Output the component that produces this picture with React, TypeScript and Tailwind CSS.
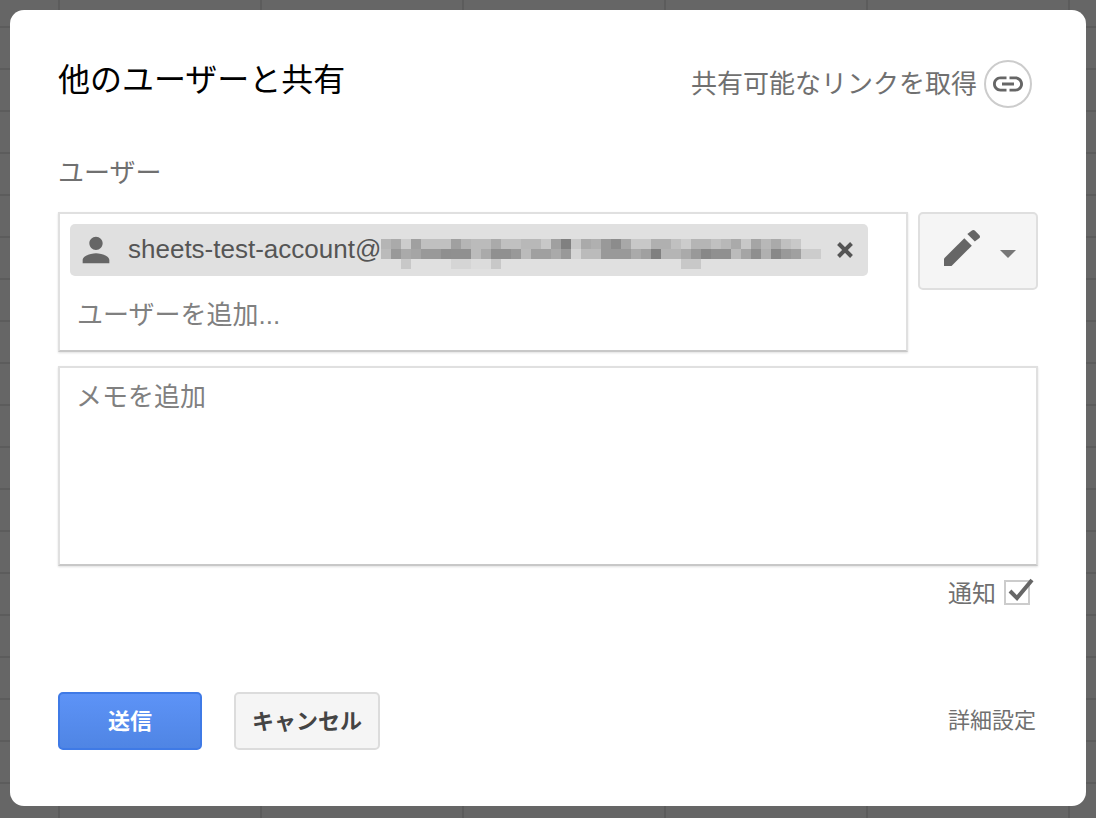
const row1 = ["b5","aa","cc","a0","c0","c0","c0","a0","b5","bb","bb","aa","c0","c0","b8","b8","c8","a0","80","c8","aa","b0","99","8c","a8","c8","c8","b0","b0","c0","cc","b5","b5","c0","b8","aa","c8","a5","b8","aa","c0","c8"];
const row2 = ["bb","99","aa","a5","99","99","8f","90","90","bb","aa","90","90","99","bb","a0","a0","aa","99","d5","bb","bb","99","99","99","aa","a0","80","b5","b5","aa","99","88","90","90","bb","a5","8f","b0","88","99","a0","cc","cc"];
const row3 = ["","","c8","","","","","d5","d5","dc","dc","c8","","","","","","","","","","","","","","","","","","","c8","c8"];

function Blur() {
  return (
    <div className="flex flex-col mt-[8px] shrink-0">
      {[row1, row2, row3].map((row, i) => (
        <div key={i} className="flex h-[10px]">
          {row.map((c, j) => (
            <div key={j} className="w-[10px] h-[10px]" style={{ backgroundColor: c ? `#${c}${c}${c}` : "transparent" }} />
          ))}
        </div>
      ))}
    </div>
  );
}

export default function App() {
  return (
    <div className="w-[1096px] h-[818px] p-[10px] overflow-hidden bg-[#666666] bg-[linear-gradient(#5c5c5c_2px,transparent_2px),linear-gradient(90deg,#5c5c5c_2px,transparent_2px)] bg-[size:202px_42px] bg-[position:58px_26px] font-['Liberation_Sans','Noto_Sans_CJK_JP',sans-serif]">
      <div className="w-[1076px] h-[796px] bg-white rounded-[14px] px-12 flex flex-col">
        <div className="flex justify-between items-center mt-[48px] h-[52px]">
          <h1 className="text-[32px] leading-[44px] text-black -mt-[9px]">他のユーザーと共有</h1>
          <div className="flex items-center mr-[6px] text-[26px] text-[#707070]">
            <span>共有可能なリンクを取得</span>
            <div className="ml-[7px] w-[48px] h-[48px] rounded-full border-2 border-[#cccccc] flex items-center justify-center">
              <svg width="36" height="36" viewBox="0 0 24 24" fill="#666666">
                <path d="M3.9 12c0-1.71 1.39-3.1 3.1-3.1h4V7H7c-2.76 0-5 2.24-5 5s2.24 5 5 5h4v-1.9H7c-1.71 0-3.1-1.39-3.1-3.1zM8 13h8v-2H8v2zm9-6h-4v1.9h4c1.71 0 3.1 1.39 3.1 3.1s-1.39 3.1-3.1 3.1h-4V17h4c2.76 0 5-2.24 5-5s-2.24-5-5-5z" />
              </svg>
            </div>
          </div>
        </div>

        <div className="mt-[54px] h-[36px] leading-[36px] text-[26px] text-[#707070] -translate-y-[9px]">ユーザー</div>

        <div className="flex mt-[12px] justify-between items-start">
          <div className="w-[850px] h-[140px] border-2 border-[#e0e0e0] border-b-[#c8c8c8] shadow-[0_1px_2px_rgba(0,0,0,0.12)] p-[10px] flex flex-col">
            <div className="w-[798px] h-[52px] bg-[#e0e0e0] rounded-[5px] flex items-center">
              <svg className="ml-[6px] shrink-0" width="40" height="40" viewBox="0 0 24 24" fill="#666666">
                <path d="M12 12c2.21 0 4-1.79 4-4s-1.79-4-4-4-4 1.79-4 4 1.79 4 4 4zm0 2c-2.67 0-8 1.34-8 4v2h16v-2c0-2.66-5.33-4-8-4z" />
              </svg>
              <span className="ml-[12px] text-[26px] text-[#555555] whitespace-nowrap -translate-y-[1px] w-[253px]">sheets-test-account@</span>
              <Blur />
              <svg className="ml-[15px] shrink-0" width="18" height="18" viewBox="0 0 18 18" stroke="#555555" strokeWidth="4">
                <path d="M2.5 2.5l13 13M15.5 2.5l-13 13" />
              </svg>
            </div>
            <div className="ml-[7px] mt-[21px] text-[26px] leading-[36px] text-[#808080]">ユーザーを追加...</div>
          </div>
          <button className="w-[120px] h-[78px] bg-[#f5f5f5] border-2 border-[#dfdfdf] rounded-[5px] flex items-center">
            <svg className="ml-[18px] -mt-[6px] shrink-0" width="48" height="48" viewBox="0 0 24 24" fill="#666666">
              <path d="M3 17.25V21h3.75L16.9 10.85l-3.75-3.75L3 17.25z" />
              <path d="M20.71 7.04c.39-.39.39-1.02 0-1.41l-2.34-2.34c-.39-.39-1.02-.39-1.41 0l-2.3 1.75 3.75 3.75 2.3-1.75z" />
            </svg>
            <svg className="ml-[14px] mt-[6px] shrink-0" width="16" height="8" viewBox="0 0 16 8" fill="#777777">
              <path d="M0 0h16L8 8z" />
            </svg>
          </button>
        </div>

        <div className="mt-[14px] w-[980px] h-[200px] border-2 border-[#e0e0e0] border-b-[#c8c8c8] shadow-[0_1px_2px_rgba(0,0,0,0.12)] px-[16px] pt-[11px]">
          <div className="text-[26px] leading-[36px] text-[#808080]">メモを追加</div>
        </div>

        <div className="flex justify-end items-center mt-[12px] mr-[8px] h-[32px]">
          <span className="text-[24px] text-[#707070]">通知</span>
          <div className="relative ml-[8px] w-[26px] h-[25px] border-2 border-[#cccccc] -mt-[4px]">
            <svg className="absolute -top-[4px] -left-[1px]" width="30" height="26" viewBox="0 0 30 26" fill="none" stroke="#666666" strokeWidth="4">
              <path d="M5 13l7 7L27 2" />
            </svg>
          </div>
        </div>

        <div className="flex items-center mt-[82px]">
          <button className="w-[144px] h-[58px] rounded-[5px] border-2 border-[#3f7ae6] bg-gradient-to-b from-[#5d93f7] to-[#4f85e4] text-white font-bold text-[22px]">送信</button>
          <button className="ml-[32px] w-[146px] h-[58px] rounded-[5px] border-2 border-[#dcdcdc] bg-[#f5f5f5] text-[#444444] font-bold text-[22px]">キャンセル</button>
          <span className="ml-auto mr-[2px] text-[22px] text-[#707070] -translate-y-[1px]">詳細設定</span>
        </div>
      </div>
    </div>
  );
}
